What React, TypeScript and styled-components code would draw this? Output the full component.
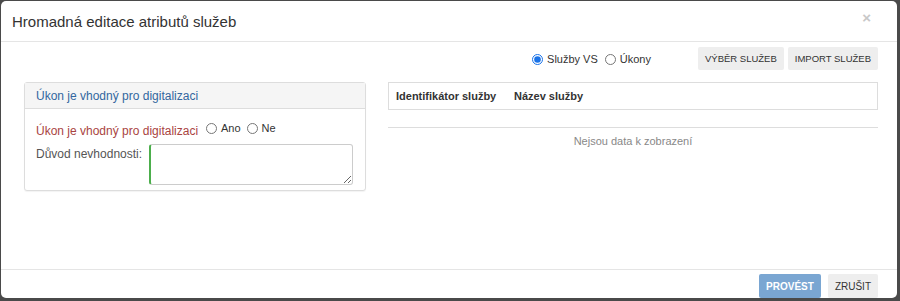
import React, { useState } from "react";
import styled, { createGlobalStyle } from "styled-components";

const GlobalStyle = createGlobalStyle`
  html, body {
    margin: 0;
    padding: 0;
    background: #4a4a4a;
  }
  body {
    font-family: "Liberation Sans", Arial, sans-serif;
    color: #333;
  }
`;

const Backdrop = styled.div`
  width: 900px;
  height: 301px;
  padding: 1px 3px 3px 1px;
  box-sizing: border-box;
  background: #4a4a4a;
`;

const Modal = styled.div`
  width: 896px;
  height: 297px;
  background: #fff;
  border-radius: 5px;
  display: flex;
  flex-direction: column;
  overflow: hidden;
`;

const Header = styled.div`
  display: flex;
  align-items: center;
  justify-content: space-between;
  height: 41px;
  padding: 0 26px 0 11px;
  border-bottom: 1px solid #e5e5e5;
  box-sizing: border-box;
`;

const Title = styled.h4`
  margin: 0;
  font-size: 15px;
  font-weight: normal;
  color: #333;
`;

const Close = styled.button`
  border: 0;
  background: none;
  padding: 0;
  font-size: 15px;
  font-weight: bold;
  color: #c8c8c8;
  line-height: 1;
  margin-top: -8px;
  font-family: "Liberation Sans", Arial, sans-serif;
`;

const Body = styled.div`
  flex: 1;
  padding: 4px 19px 0 23px;
`;

const Toolbar = styled.div`
  display: flex;
  justify-content: flex-end;
  align-items: center;
  height: 24px;
  margin-bottom: 12px;
`;

const RadioGroup = styled.div<{ $gap?: number }>`
  display: flex;
  align-items: center;
  gap: ${(p) => p.$gap ?? 7}px;
  margin-top: ${(p) => (p.$gap ? 0 : 2)}px;
`;

const RadioLabel = styled.label`
  display: flex;
  align-items: center;
  font-size: 11px;
  color: #333;
`;

const Radio = styled.input.attrs({ type: "radio" })`
  width: 11px;
  height: 11px;
  margin: 0 4px 0 0;
  accent-color: #1a73e8;
`;

const ButtonRow = styled.div`
  display: flex;
  gap: 4px;
  margin-left: 47px;
`;

const Button = styled.button<{ $primary?: boolean; $large?: boolean }>`
  height: ${(p) => (p.$large ? 24 : 23)}px;
  padding: 0 7px;
  border: 0;
  border-radius: 2px;
  font-family: "Liberation Sans", Arial, sans-serif;
  font-size: ${(p) => (p.$large ? 10 : 9.5)}px;
  text-transform: uppercase;
  background: ${(p) => (p.$primary ? "#7aa6d2" : "#eeeeee")};
  color: ${(p) => (p.$primary ? "#fff" : "#333")};
  font-weight: ${(p) => (p.$primary ? "bold" : "normal")};
`;

const Columns = styled.div`
  display: grid;
  grid-template-columns: 342px 1fr;
  gap: 22px;
  align-items: start;
`;

const Panel = styled.div`
  border: 1px solid #dddddd;
  border-radius: 3px;
  box-shadow: 0 1px 1px rgba(0, 0, 0, 0.05);
  background: #fff;
`;

const PanelHeading = styled.div`
  height: 25px;
  display: flex;
  align-items: center;
  padding: 0 11px;
  background: #f5f5f5;
  border-bottom: 1px solid #dddddd;
  font-size: 12px;
  color: #33679f;
`;

const PanelBody = styled.div`
  padding: 13px 12px 5px 11px;
  display: flex;
  flex-direction: column;
  gap: 6px;
`;

const FormRow = styled.div`
  display: flex;
  align-items: flex-start;
`;

const FieldLabel = styled.span<{ $width: number; $error?: boolean }>`
  width: ${(p) => p.$width}px;
  flex-shrink: 0;
  font-size: 12px;
  padding-top: ${(p) => (p.$error ? 2 : 3)}px;
  color: ${(p) => (p.$error ? "#a94442" : "#555")};
`;

const TextArea = styled.textarea`
  width: 204px;
  height: 41px;
  box-sizing: border-box;
  border: 1px solid #cccccc;
  border-left: 2px solid #4cae4c;
  border-radius: 3px;
  resize: both;
  font-family: "Liberation Sans", Arial, sans-serif;
  font-size: 12px;
`;

const TableHead = styled.div`
  display: flex;
  align-items: center;
  height: 28px;
  padding: 0 7px;
  border: 1px solid #dddddd;
  box-sizing: border-box;
`;

const HeadCell = styled.span<{ $width?: number }>`
  width: ${(p) => (p.$width ? `${p.$width}px` : "auto")};
  font-size: 11px;
  font-weight: bold;
  color: #333;
`;

const EmptyRow = styled.div`
  margin-top: 17px;
  border-top: 1px solid #dddddd;
  padding-top: 7px;
  text-align: center;
  font-size: 11px;
  color: #888;
`;

const Footer = styled.div`
  height: 29px;
  border-top: 1px solid #e5e5e5;
  box-sizing: border-box;
  display: flex;
  justify-content: flex-end;
  align-items: flex-end;
  gap: 7px;
  padding: 0 19px 0 0;
`;

export default function App() {
  const [scope, setScope] = useState("vs");
  const [suitable, setSuitable] = useState<string>("");

  return (
    <>
      <GlobalStyle />
      <Backdrop>
        <Modal>
          <Header>
            <Title>Hromadná editace atributů služeb</Title>
            <Close aria-label="Zavřít">×</Close>
          </Header>
          <Body>
            <Toolbar>
              <RadioGroup>
                <RadioLabel>
                  <Radio name="scope" checked={scope === "vs"} onChange={() => setScope("vs")} />
                  Služby VS
                </RadioLabel>
                <RadioLabel>
                  <Radio name="scope" checked={scope === "ukony"} onChange={() => setScope("ukony")} />
                  Úkony
                </RadioLabel>
              </RadioGroup>
              <ButtonRow>
                <Button>Výběr služeb</Button>
                <Button>Import služeb</Button>
              </ButtonRow>
            </Toolbar>
            <Columns>
              <Panel>
                <PanelHeading>Úkon je vhodný pro digitalizaci</PanelHeading>
                <PanelBody>
                  <FormRow>
                    <FieldLabel $width={170} $error>
                      Úkon je vhodný pro digitalizaci
                    </FieldLabel>
                    <RadioGroup $gap={6}>
                      <RadioLabel>
                        <Radio name="suitable" checked={suitable === "ano"} onChange={() => setSuitable("ano")} />
                        Ano
                      </RadioLabel>
                      <RadioLabel>
                        <Radio name="suitable" checked={suitable === "ne"} onChange={() => setSuitable("ne")} />
                        Ne
                      </RadioLabel>
                    </RadioGroup>
                  </FormRow>
                  <FormRow>
                    <FieldLabel $width={113}>Důvod nevhodnosti:</FieldLabel>
                    <TextArea />
                  </FormRow>
                </PanelBody>
              </Panel>
              <div>
                <TableHead>
                  <HeadCell $width={118}>Identifikátor služby</HeadCell>
                  <HeadCell>Název služby</HeadCell>
                </TableHead>
                <EmptyRow>Nejsou data k zobrazení</EmptyRow>
              </div>
            </Columns>
          </Body>
          <Footer>
            <Button $primary $large disabled>Provést</Button>
            <Button $large>Zrušit</Button>
          </Footer>
        </Modal>
      </Backdrop>
    </>
  );
}
